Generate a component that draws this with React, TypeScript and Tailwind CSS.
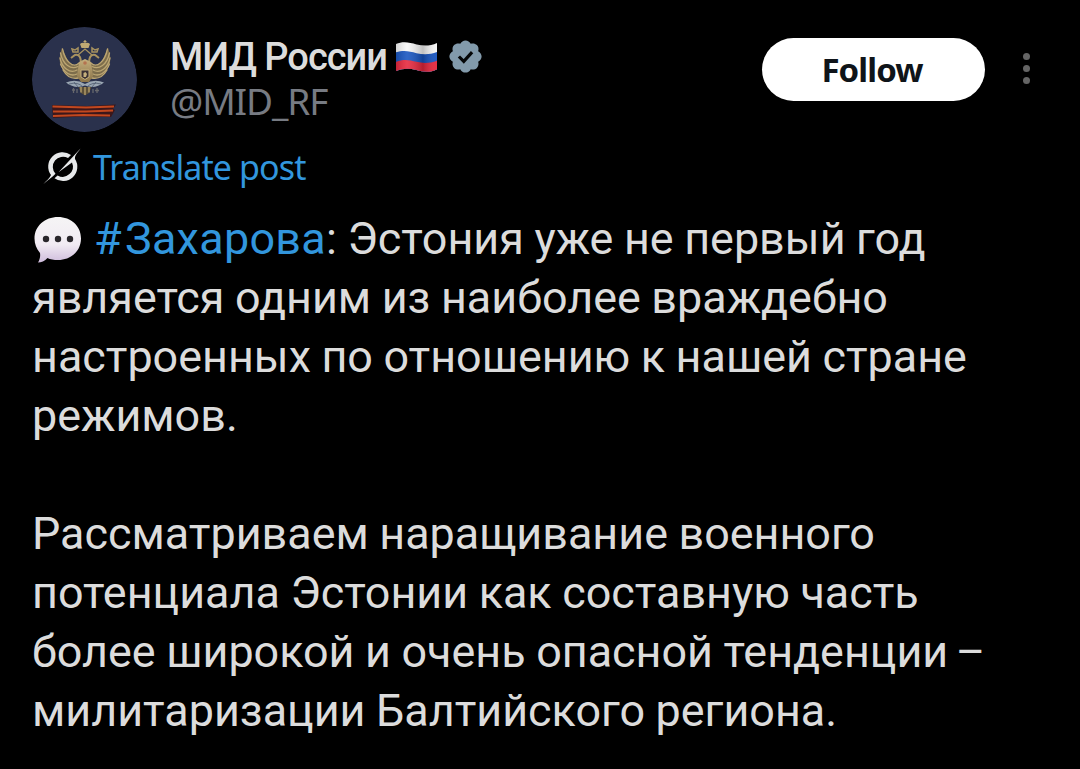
import type { ReactNode } from "react";

function Avatar() {
  return (
    <svg viewBox="0 0 105 105" className="size-[105px] shrink-0 rounded-full">
      <defs>
        <linearGradient id="gold" x1="0" y1="0" x2="0" y2="1">
          <stop offset="0" stopColor="#c4ae7c" />
          <stop offset="1" stopColor="#8b7449" />
        </linearGradient>
      </defs>
      <circle cx="52.5" cy="52.5" r="52.5" fill="#2a314c" />
      {/* wings */}
      <g fill="#7d6d4b">
        <path d="M30 21C28 27 26 34 30 41C33 48 39 51 47 52L48 36C42 41 37 37 35 32C33 28 32 24 30 21Z" />
        <path d="M76 21C78 27 80 34 76 41C73 48 67 51 59 52L58 36C64 41 69 37 71 32C73 28 74 24 76 21Z" />
      </g>
      <g fill="none" stroke="#bba572" strokeWidth="1.300" strokeLinecap="round">
        <path d="M47 36C41 42 33 34 30.500 22" />
        <path d="M46 39.500C39 43 31 38 28.500 26" />
        <path d="M45 43C38 47 30 41 28 31" />
        <path d="M45 47C39 50 32 46 28.500 37" />
        <path d="M46 51C41 52 35 50 31 43" />
        <path d="M59 36C65 42 73 34 75.500 22" />
        <path d="M60 39.500C67 43 75 38 77.500 26" />
        <path d="M61 43C68 47 76 41 78 31" />
        <path d="M61 47C67 50 74 46 77.500 37" />
        <path d="M60 51C65 52 71 50 75 43" />
      </g>
      {/* heads, crowns and body */}
      <g fill="none" stroke="#a8925f" strokeWidth="2">
        <path d="M49 38C49 31 48 27 43 28L39 31M57 38C57 31 58 27 63 28L67 31" />
        <path d="M41 25L40 22L43 23L46 21V25ZM60 25V21L63 23L66 22L65 25Z" strokeWidth="1.500" />
        <path d="M46 28L53 22L60 28" strokeWidth="1.300" />
      </g>
      <path d="M49.500 21L48 17Q50 15 53 16Q56 15 58 17L56.500 21Z" fill="#c0a973" />
      <path d="M53 17V13M51.500 14.500H54.500" stroke="#c0a973" strokeWidth="1.200" />
      <path d="M47 35L53 32L59 35L61 49L57 55H49L45 49Z" fill="url(#gold)" />
      <path d="M49 43H57V50L53 52.500L49 50Z" fill="#3a3033" stroke="#c4ae7c" />
      <circle cx="53" cy="36" r="1.800" fill="#b57350" />
      <path d="M51.500 50V46L53.500 45L55 47L54 50Z" fill="#c4ae7c" />
      <path d="M46.500 60L49 66L53 68.500L57 66L59.500 60Z" fill="#5c5039" />
      <path d="M49 60V65.500M53 60V68M57 60V65.500" stroke="#b49d6b" strokeWidth="1.400" />
      <path d="M40 63H43M41.500 61V66M45 62V66M61 62V66M65 61V66M63 63.500H67" stroke="#67686c" strokeWidth="1.300" />
      {/* laurel */}
      <path d="M34 55.500Q44 51.500 53 57Q62 51.500 72 55.500Q63 62.500 53 58.500Q43 62.500 34 55.500Z" fill="#9aa6b2" />
      <path d="M37 57Q46 54.500 51 60M42 55L46 60M69 57Q60 54.500 55 60M64 55L60 60" fill="none" stroke="#4f5c70" strokeWidth=".8" />
      {/* ribbon */}
      <path d="M20 78L55 79L84 77.500L81 82L83 83L79 90L50 89.500L21 91Z" fill="#3c171a" />
      <g fill="none" stroke="#c2481f" strokeWidth="2">
        <path d="M20.500 79.500L54 80.500L82 79.500" />
        <path d="M21 84.500L54 84.500L81 83.500" />
        <path d="M21 89L51 88L78 88.500" />
      </g>
    </svg>
  );
}

function Flag() {
  return (
    <svg viewBox="0 0 42 32" preserveAspectRatio="none" className="mt-[2px] h-[31px] w-[43px]">
      <defs>
        <clipPath id="flag">
          <path d="M1 2C8-1 14 .5 21 2.500S35 4 41 1V28C34 32 28 31 21 29S8 27 1 30Z" />
        </clipPath>
        <linearGradient id="wave">
          <stop offset="0" stopColor="#000" stopOpacity=".16" />
          <stop offset=".28" stopColor="#fff" stopOpacity=".12" />
          <stop offset=".65" stopColor="#000" stopOpacity=".22" />
          <stop offset="1" stopColor="#fff" stopOpacity=".05" />
        </linearGradient>
      </defs>
      <g clipPath="url(#flag)">
        <path d="M0 0H42V32H0Z" fill="#f7f7f7" />
        <path d="M0 11C8 8 14 9.500 21 11.500S35 13 42 10V32H0Z" fill="#1553c0" />
        <path d="M0 21C8 17 14 18.500 21 20.500S35 22 42 19V32H0Z" fill="#e7253b" />
        <path d="M0 0H42V32H0Z" fill="url(#wave)" />
      </g>
    </svg>
  );
}

function VerifiedBadge() {
  return (
    <svg viewBox="1.500 1.500 21 21" className="size-[33px]">
      <path
        fill="#829aab"
        d="M22.250 12c0-1.430-.88-2.670-2.190-3.340.46-1.390.2-2.900-.81-3.910s-2.520-1.270-3.910-.81c-.66-1.310-1.910-2.190-3.340-2.190s-2.670.88-3.330 2.190c-1.400-.46-2.910-.2-3.920.81s-1.260 2.520-.8 3.910c-1.310.67-2.200 1.910-2.200 3.340s.89 2.670 2.200 3.340c-.46 1.390-.21 2.900.8 3.910s2.520 1.260 3.910.81c.67 1.310 1.910 2.190 3.340 2.190s2.680-.88 3.340-2.190c1.390.45 2.900.2 3.910-.81s1.270-2.520.81-3.910c1.310-.67 2.190-1.910 2.190-3.340z"
      />
      <path d="M7.800 12L10.900 15.100L16.200 9.200" fill="none" stroke="#050708" strokeWidth="2" />
    </svg>
  );
}

function GrokIcon() {
  return (
    <svg viewBox="0 0 38 36" className="h-9 w-[38px] overflow-visible" fill="#e7e9ea">
      <path d="M28 6A14.300 14.300 0 0 0 8 26C6.500 29.500 3 32 .5 35C4 31.500 9 28.500 12.500 24.800A10.200 10.200 0 0 1 25 9Z" />
      <path d="M37.500-.5C35 3.500 31.500 6 32 10A14.300 14.300 0 0 1 11.500 29.300L14.600 26.400A10.200 10.200 0 0 0 29 13.500L15.500 23.300Z" />
    </svg>
  );
}

function SpeechBubble() {
  return (
    <svg viewBox="0 0 48 46" className="h-[46px] w-12">
      <defs>
        <linearGradient id="bubble" x1="0" y1="0" x2="0" y2="1">
          <stop offset="0" stopColor="#f5f4f5" />
          <stop offset=".6" stopColor="#f1ebf3" />
          <stop offset="1" stopColor="#cfbcdc" />
        </linearGradient>
      </defs>
      <path
        fill="url(#bubble)"
        d="M24 0C37 0 47 9 47 21.500S37 43 24 43C20 43 16 42.500 13.500 41C11 44 7 45.500 4 45.500C6 42 6.500 39 6 36C2.500 32 .5 27 .5 21.500C.5 9 11 0 24 0Z"
      />
      <g fill="#29262b">
        <circle cx="12" cy="22" r="3.200" />
        <circle cx="24" cy="22" r="3.200" />
        <circle cx="36" cy="22" r="3.200" />
      </g>
    </svg>
  );
}

function Line({ children }: { children?: ReactNode }) {
  return <div className="h-[59px] whitespace-nowrap">{children}</div>;
}

export default function App() {
  return (
    <main className="h-[769px] w-[1080px] overflow-hidden bg-black px-8 pt-[27px] font-['Roboto','Noto_Sans',sans-serif] text-[#dcdcdc]">
      <header className="flex h-[105px] items-start">
        <Avatar />
        <div className="ml-[33px] pt-[6px]">
          <div className="flex h-[46px] items-center whitespace-nowrap">
            <span className="pt-[2px] text-[38px] font-medium tracking-[-1px]">МИД России</span>
            <div className="ml-2">
              <Flag />
            </div>
            <div className="ml-[11px]">
              <VerifiedBadge />
            </div>
          </div>
          <div className="h-[46px] font-['Noto_Sans',sans-serif] text-[37px] leading-[44px] tracking-[-1.1px] text-[#777b83]">
            @MID_RF
          </div>
        </div>
        <button className="mt-[11px] mr-[38px] ml-auto h-[63px] w-[223px] rounded-full bg-white pt-px pr-[3px] font-['Noto_Sans',sans-serif] text-[33px] font-bold tracking-[-0.9px] text-[#0f1419]">
          Follow
        </button>
        <div className="mt-[26px] mr-[18px] flex flex-col gap-[5px]">
          <i className="size-[7px] rounded-full bg-[#656565]" />
          <i className="size-[7px] rounded-full bg-[#656565]" />
          <i className="size-[7px] rounded-full bg-[#656565]" />
        </div>
      </header>

      <div className="mt-[13px] ml-[11px] flex h-[44px] items-center gap-3 font-['Noto_Sans',sans-serif] text-[34px] tracking-[-0.9px] text-[#3296dd]">
        <GrokIcon />
        <span className="whitespace-nowrap">Translate post</span>
      </div>

      <article className="mt-[20px] text-[44.900px] leading-[59px] [word-spacing:-0.6px]">
        <div className="flex h-[59px] items-center whitespace-nowrap">
          <div className="mt-[2px] mr-[12px] ml-[2px]">
            <SpeechBubble />
          </div>
          <span>
            <span className="tracking-[0.3px] text-[#3296dd]">
              <span className="mr-[3px]">#</span>Захарова
            </span>
            : Эстония уже не первый год
          </span>
        </div>
        <Line>является одним из наиболее враждебно</Line>
        <Line>настроенных по отношению к нашей стране</Line>
        <Line>режимов.</Line>
        <Line />
        <Line>Рассматриваем наращивание военного</Line>
        <Line>потенциала Эстонии как составную часть</Line>
        <Line>
          более широкой и очень опасной тенденции<span className="[word-spacing:-3.5px]"> –</span>
        </Line>
        <Line>милитаризации Балтийского региона.</Line>
      </article>
    </main>
  );
}
